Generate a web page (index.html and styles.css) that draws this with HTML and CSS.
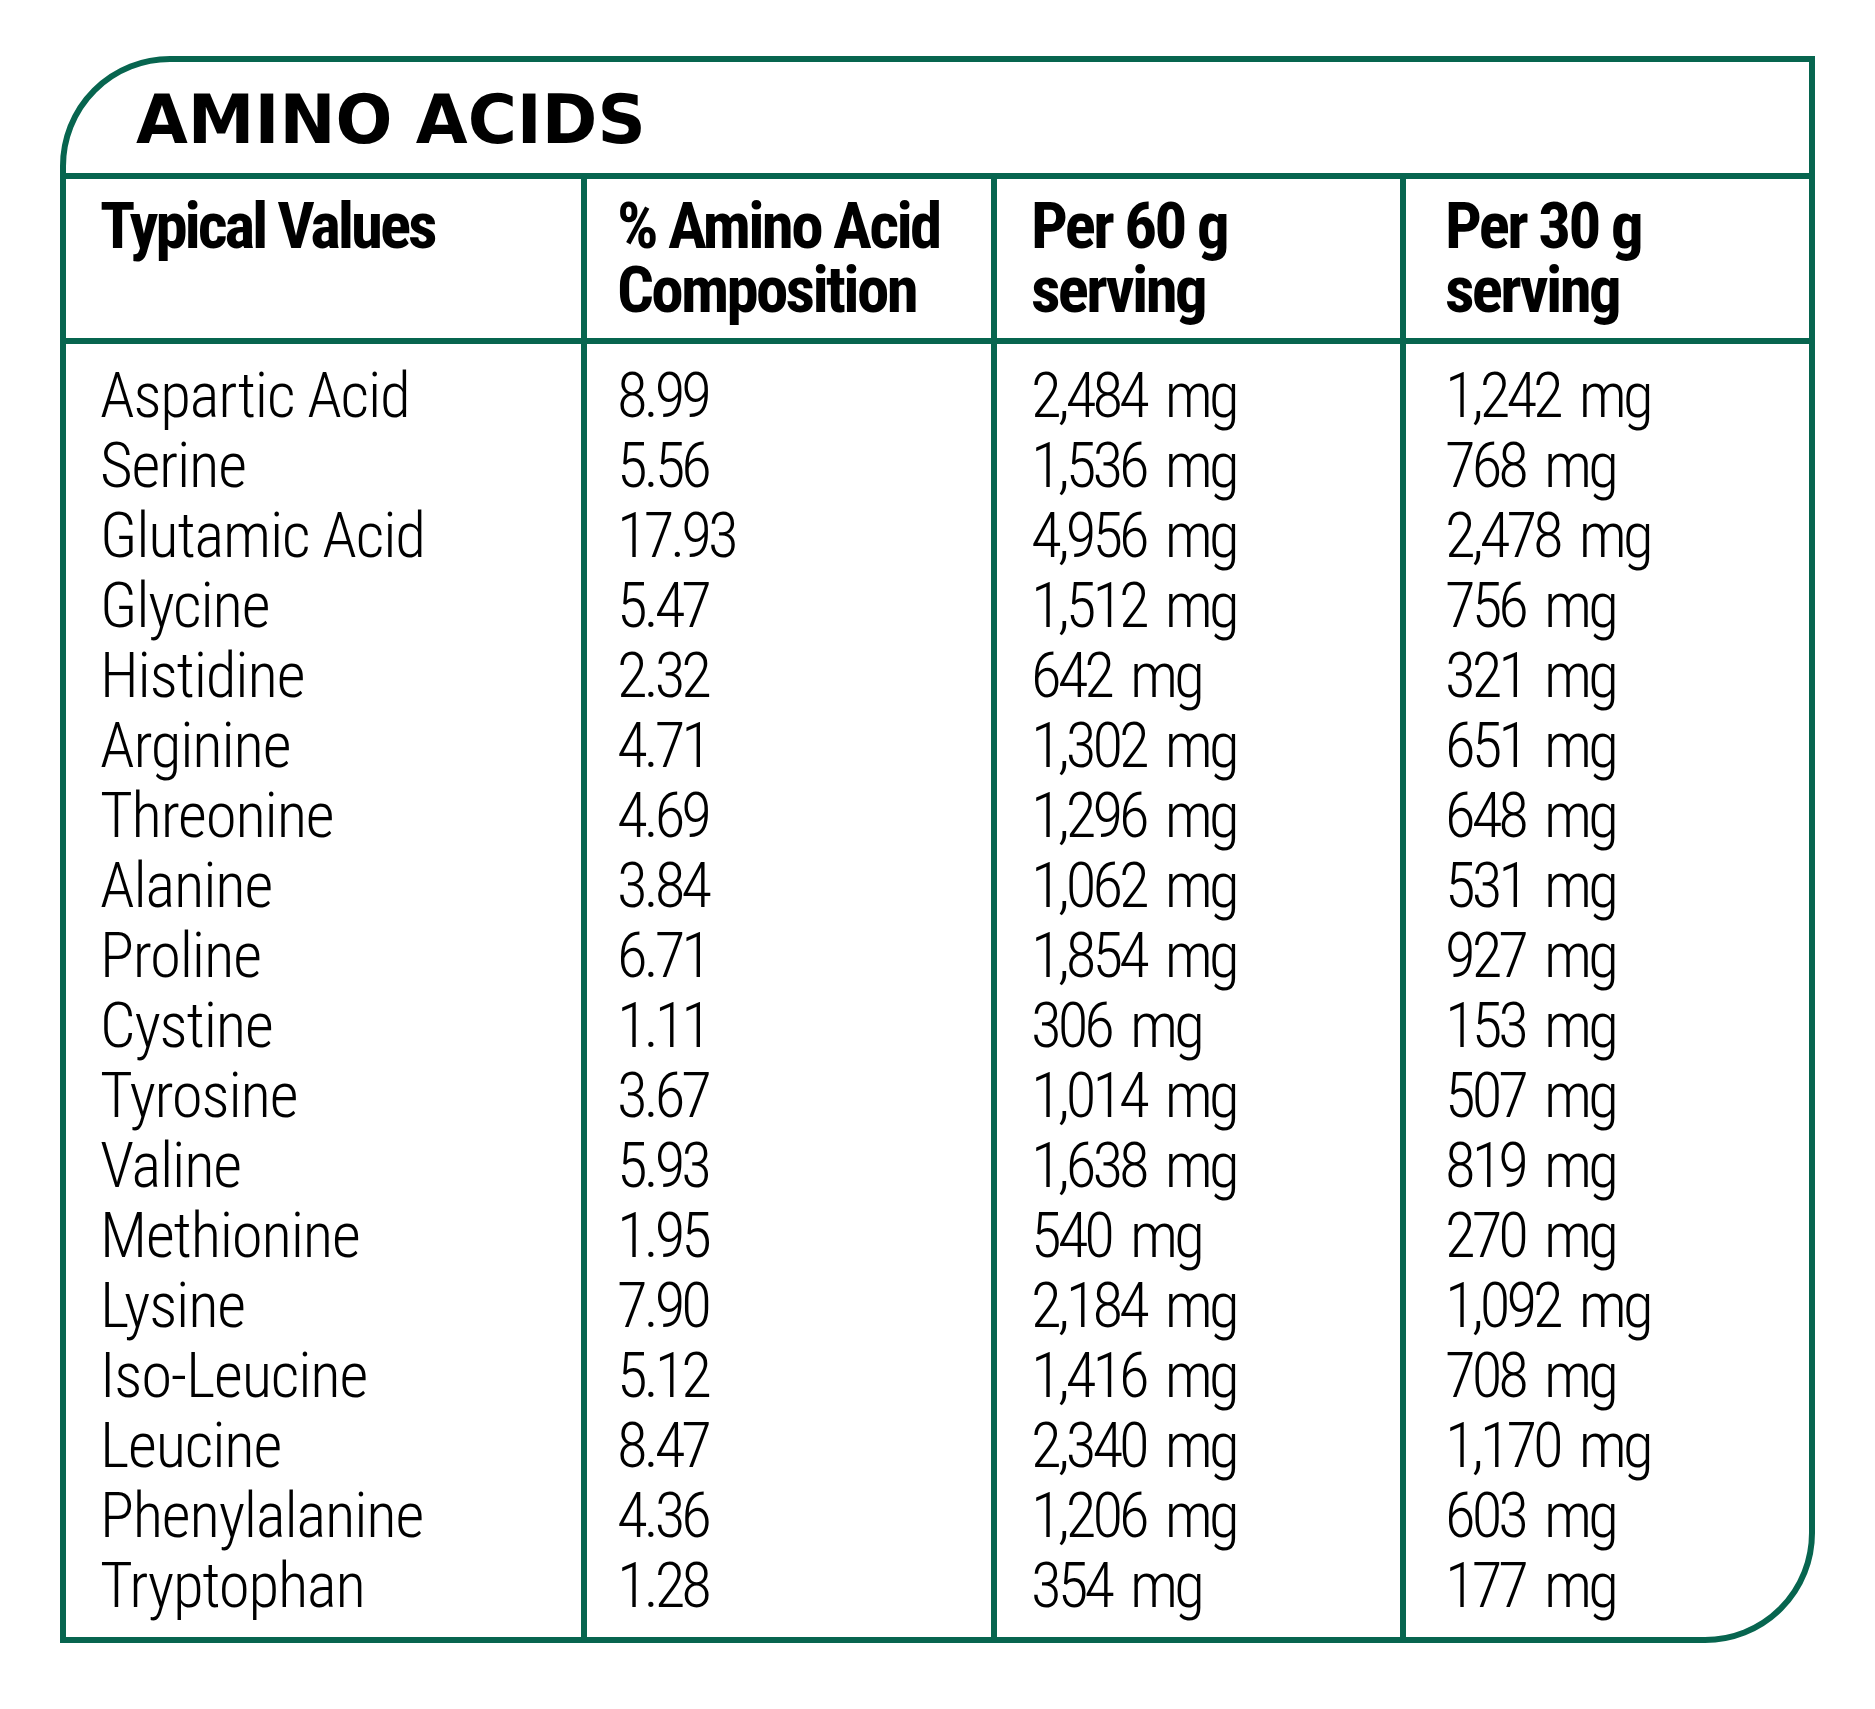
FILE: index.html
```html
<!DOCTYPE html>
<html lang="en">
<head>
<meta charset="utf-8">
<title>Amino Acids</title>
<link rel="stylesheet" href="styles.css">
</head>
<body>
<div class="page">
  <section class="card">
    <h1 class="title">AMINO ACIDS</h1>
    <div class="grid">
      <div class="cell head c1">Typical Values</div>
      <div class="cell head c2">% Amino Acid<br>Composition</div>
      <div class="cell head c3">Per 60 g<br>serving</div>
      <div class="cell head c4">Per 30 g<br>serving</div>

      <div class="cell body c1 first">Aspartic Acid</div><div class="cell body c2 first">8.99</div><div class="cell body c3 first">2,484 mg</div><div class="cell body c4 first">1,242 mg</div>
      <div class="cell body c1">Serine</div><div class="cell body c2">5.56</div><div class="cell body c3">1,536 mg</div><div class="cell body c4">768 mg</div>
      <div class="cell body c1">Glutamic Acid</div><div class="cell body c2">17.93</div><div class="cell body c3">4,956 mg</div><div class="cell body c4">2,478 mg</div>
      <div class="cell body c1">Glycine</div><div class="cell body c2">5.47</div><div class="cell body c3">1,512 mg</div><div class="cell body c4">756 mg</div>
      <div class="cell body c1">Histidine</div><div class="cell body c2">2.32</div><div class="cell body c3">642 mg</div><div class="cell body c4">321 mg</div>
      <div class="cell body c1">Arginine</div><div class="cell body c2">4.71</div><div class="cell body c3">1,302 mg</div><div class="cell body c4">651 mg</div>
      <div class="cell body c1">Threonine</div><div class="cell body c2">4.69</div><div class="cell body c3">1,296 mg</div><div class="cell body c4">648 mg</div>
      <div class="cell body c1">Alanine</div><div class="cell body c2">3.84</div><div class="cell body c3">1,062 mg</div><div class="cell body c4">531 mg</div>
      <div class="cell body c1">Proline</div><div class="cell body c2">6.71</div><div class="cell body c3">1,854 mg</div><div class="cell body c4">927 mg</div>
      <div class="cell body c1">Cystine</div><div class="cell body c2">1.11</div><div class="cell body c3">306 mg</div><div class="cell body c4">153 mg</div>
      <div class="cell body c1">Tyrosine</div><div class="cell body c2">3.67</div><div class="cell body c3">1,014 mg</div><div class="cell body c4">507 mg</div>
      <div class="cell body c1">Valine</div><div class="cell body c2">5.93</div><div class="cell body c3">1,638 mg</div><div class="cell body c4">819 mg</div>
      <div class="cell body c1">Methionine</div><div class="cell body c2">1.95</div><div class="cell body c3">540 mg</div><div class="cell body c4">270 mg</div>
      <div class="cell body c1">Lysine</div><div class="cell body c2">7.90</div><div class="cell body c3">2,184 mg</div><div class="cell body c4">1,092 mg</div>
      <div class="cell body c1">Iso-Leucine</div><div class="cell body c2">5.12</div><div class="cell body c3">1,416 mg</div><div class="cell body c4">708 mg</div>
      <div class="cell body c1">Leucine</div><div class="cell body c2">8.47</div><div class="cell body c3">2,340 mg</div><div class="cell body c4">1,170 mg</div>
      <div class="cell body c1">Phenylalanine</div><div class="cell body c2">4.36</div><div class="cell body c3">1,206 mg</div><div class="cell body c4">603 mg</div>
      <div class="cell body c1 last">Tryptophan</div><div class="cell body c2 last">1.28</div><div class="cell body c3 last">354 mg</div><div class="cell body c4 last">177 mg</div>
    </div>
  </section>
</div>
</body>
</html>
```
FILE: styles.css
```css
html, body {
  margin: 0;
  padding: 0;
  background: #ffffff;
}

.page {
  padding: 56px 0 66px 60px;
}

.card {
  box-sizing: border-box;
  width: 1755px;
  border: 6px solid #07654f;
  border-radius: 110px 0 110px 0;
  background: #ffffff;
  color: #000000;
}

.title {
  box-sizing: border-box;
  height: 117px;
  margin: 0;
  padding: 25px 0 0 70px;
  border-bottom: 6px solid #07654f;
  font-family: "DejaVu Sans", "Liberation Sans", sans-serif;
  font-weight: 700;
  font-size: 67px;
  line-height: 67px;
}

.grid {
  display: grid;
  grid-template-columns: 515px 410px 409px 409px;
}

.cell {
  box-sizing: border-box;
  font-family: "Roboto Condensed", "Roboto", "Liberation Sans", sans-serif;
  font-stretch: 75%;
  white-space: nowrap;
}

.c2, .c3, .c4 {
  border-left: 6px solid #07654f;
}

.c1 { padding-left: 34px; }
.c2 { padding-left: 30px; }
.c3 { padding-left: 34px; }
.c4 { padding-left: 39px; }

.head {
  height: 165px;
  padding-top: 15px;
  border-bottom: 6px solid #07654f;
  font-weight: 700;
  font-size: 65px;
  line-height: 64px;
  letter-spacing: -2.7px;
}

.head.c1 {
  letter-spacing: -3.1px;
}

.body {
  font-weight: 300;
  font-size: 63px;
  line-height: 70px;
  letter-spacing: -4px;
  word-spacing: 9px;
}

.body.c1 {
  letter-spacing: -1.2px;
  word-spacing: 0;
}

.body.first {
  padding-top: 17px;
}

.body.last {
  padding-bottom: 16px;
}
```
